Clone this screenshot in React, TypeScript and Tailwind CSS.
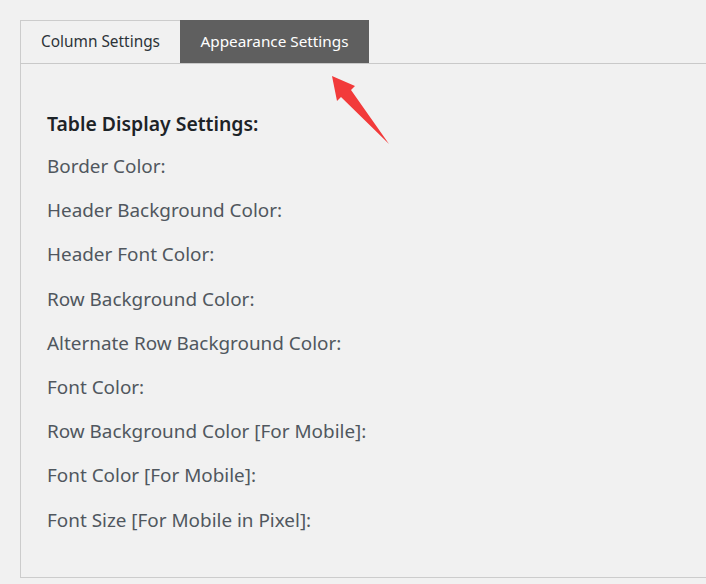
import React from "react";

const labels = [
  "Border Color:",
  "Header Background Color:",
  "Header Font Color:",
  "Row Background Color:",
  "Alternate Row Background Color:",
  "Font Color:",
  "Row Background Color [For Mobile]:",
  "Font Color [For Mobile]:",
  "Font Size [For Mobile in Pixel]:",
];

export default function App() {
  return (
    <div
      className="relative w-[706px] h-[584px] bg-[#f1f1f1] overflow-hidden pt-[20px] pl-[20px]"
      style={{ fontFamily: '"Noto Sans", "Open Sans", sans-serif' }}
    >
      <div className="flex h-[44px] border-b border-[#c9c9c9]">
        <div className="w-[160px] h-[43px] border-t border-l border-[#cccccc] flex items-center justify-center text-[15.4px] text-[#2c3338]">
          Column Settings
        </div>
        <div className="w-[189px] h-[43px] bg-[#5f5f5f] flex items-center justify-center text-[15.3px] text-white">
          Appearance Settings
        </div>
      </div>
      <div className="h-[514px] border-l border-b border-[#cccccc] pl-[26px] pt-[46px]">
        <div className="text-[19.4px] font-semibold text-[#1d2327] leading-[28px]">
          Table Display Settings:
        </div>
        <div className="flex flex-col mt-[14px] gap-[16.2px]">
          {labels.map((l) => (
            <div key={l} className="text-[18.9px] text-[#50575e] leading-[28px]">
              {l}
            </div>
          ))}
        </div>
      </div>
      <svg
        className="absolute left-0 top-0 pointer-events-none"
        width="706"
        height="584"
        viewBox="0 0 706 584"
      >
        <polygon
          points="332,76 355,86 351,90 389,144 341,97 337,101"
          fill="#f23a3a"
        />
      </svg>
    </div>
  );
}
